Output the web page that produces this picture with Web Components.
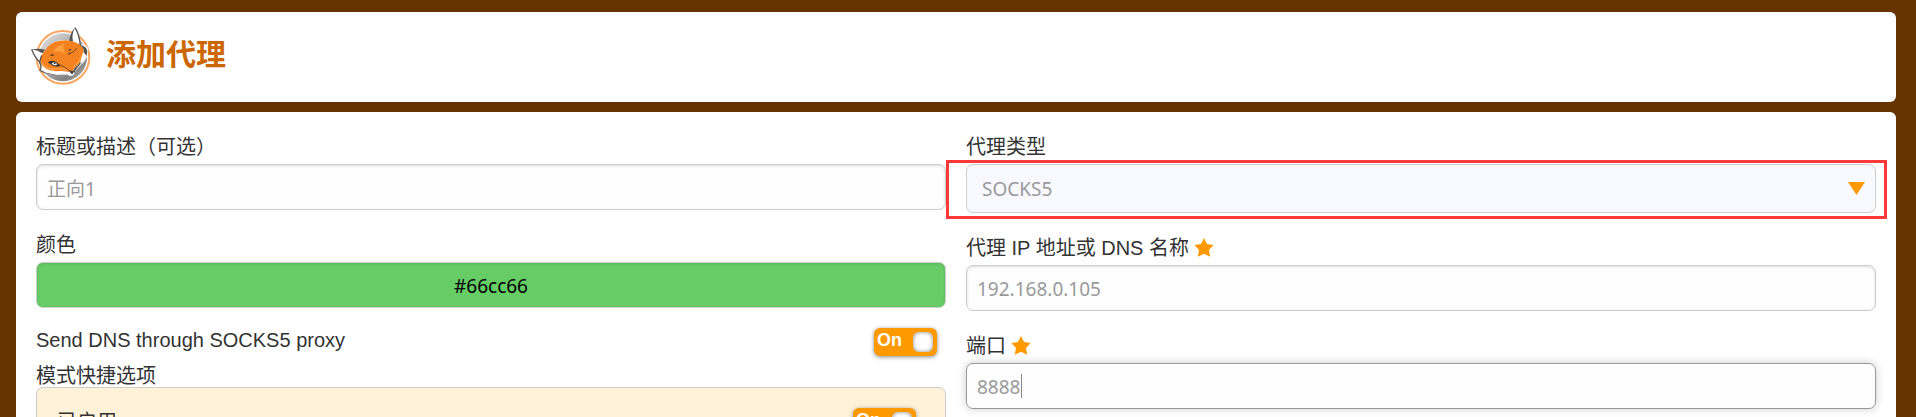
<!DOCTYPE html>
<html lang="zh-CN">
<head>
<meta charset="utf-8">
<title>添加代理</title>
<style>
    html, body {
        height: 100%;
        margin: 0;
        overflow: hidden;
    }

    body {
        background: #663300;
        color: #333;
        font: 20px/30px "Liberation Sans", "Noto Sans CJK SC", sans-serif;
    }
</style>
</head>
<body>
<proxy-page></proxy-page>

<script>
class FoxLogo extends HTMLElement {
    constructor() {
        super();
        this.attachShadow({ mode: "open" });

        this.shadowRoot.innerHTML = `
            <style>
                :host {
                    display: block;
                    width: 76px;
                    height: 70px;
                }

                svg {
                    display: block;
                    width: 100%;
                    height: 100%;
                }
            </style>

            <svg viewBox="0 0 228 210" aria-hidden="true">
                <defs>
                    <linearGradient id="disc" x1="0" y1="0" x2="1" y2="1">
                        <stop offset="0" stop-color="#e4e4e4"/>
                        <stop offset=".4" stop-color="#b4b4b4"/>
                        <stop offset=".75" stop-color="#808080"/>
                        <stop offset="1" stop-color="#c0c0c0"/>
                    </linearGradient>
                </defs>
                <circle cx="117" cy="112" r="79" fill="#fff" stroke="#faa661" stroke-width="6"/>
                <circle cx="117" cy="112" r="72" fill="url(#disc)"/>
                <!-- head -->
                <path d="M22 88 Q42 85 64 89 Q80 66 108 61 Q125 59 138 61 Q138 40 153 22 Q165 38 169 72 Q186 74 193 84 Q193 108 180 127 Q158 144 149 164 Q142 170 131 166 Q94 171 64 159 L48 151 Q55 138 46 126 Q33 116 22 88Z" fill="#fff"/>
                <path d="M62 92 Q79 65 108 62 Q142 56 170 75 Q182 86 179 103 Q173 128 158 139 Q147 147 144 158 Q119 150 96 154 Q59 151 49 127 Q49 106 62 92Z" fill="#f58220"/>
                <path d="M88 96 Q97 77 121 71 Q113 82 125 101 Q111 91 88 96Z" fill="#ffa041"/>
                <path d="M53 128 Q60 144 87 147 Q110 144 128 150 M148 143 Q162 132 171 110" fill="none" stroke="#ffa041" stroke-width="4"/>
                <!-- ears -->
                <path d="M23 88 Q44 84 64 89 L55 100 Q43 91 23 88Z M136 63 Q137 41 153 22 Q142 45 147 64Z" fill="#555"/>
                <path d="M23 88 Q32 113 47 126 L53 106 M153 23 Q166 43 169 76" fill="none" stroke="#555" stroke-width="4"/>
                <!-- cheeks and muzzle -->
                <path d="M168 74 Q191 80 190 95 Q188 115 176 127 Q161 138 151 158 L146 156 Q151 142 164 133 Q180 112 180 94 Q178 82 168 74Z" fill="#555"/>
                <path d="M177 96 L188 107 Q184 123 168 131Z" fill="#fff"/>
                <path d="M46 126 Q55 139 48 151 L64 159" fill="none" stroke="#555" stroke-width="4"/>
                <path d="M64 159 Q98 170 132 165" fill="none" stroke="#777" stroke-width="3"/>
                <!-- open eye, wink and brows -->
                <path d="M71 127 Q88 113 110 138 Q89 143 79 132Z" fill="#333"/>
                <path d="M83 131 Q92 122 100 133 Q92 139 83 131Z" fill="#fff"/>
                <circle cx="92" cy="130" r="3" fill="#333"/>
                <path d="M107 134 Q123 141 141 155 M137 96 Q137 104 133 103 Q148 98 160 85" fill="none" stroke="#7a4a25" stroke-width="3"/>
                <path d="M77 107 Q85 99 91 107Z M133 94 Q134 84 144 88Z" fill="#5b3920"/>
                <path d="M136 153 Q143 149 149 155 Q148 164 142 162Z" fill="#444"/>
            </svg>
        `;
    }
}

class PageHeader extends HTMLElement {
    constructor() {
        super();
        this.attachShadow({ mode: "open" });

        this.shadowRoot.innerHTML = `
            <style>
                :host {
                    display: flex;
                    align-items: center;
                    gap: 6px;
                    padding: 8px 8px 12px;
                    background: #fff;
                    border-radius: 6px;
                }

                h1 {
                    margin: 0;
                    color: #cc6600;
                    font-size: 30px;
                    line-height: 40px;
                    font-weight: bold;
                }
            </style>

            <fox-logo></fox-logo>
            <h1><slot></slot></h1>
        `;
    }
}

class StarMark extends HTMLElement {
    constructor() {
        super();
        this.attachShadow({ mode: "open" });

        this.shadowRoot.innerHTML = `
            <style>
                :host {
                    display: block;
                    width: 20px;
                    height: 20px;
                }

                svg {
                    display: block;
                }
            </style>

            <svg width="20" height="20" viewBox="0 0 20 20" aria-hidden="true">
                <path d="M10 0 L13 6 L19.6 7 L15 12 L16.2 18.8 L10 15.8 L3.8 18.8 L5 12 L0.4 7 L7 6Z" fill="#ff9900"/>
            </svg>
        `;
    }
}

class TextField extends HTMLElement {
    constructor() {
        super();
        this.attachShadow({ mode: "open" });

        this.shadowRoot.innerHTML = `
            <style>
                :host {
                    display: block;
                }

                label {
                    display: flex;
                    align-items: center;
                    gap: 5px;
                    margin-bottom: 2px;
                }

                .box {
                    position: relative;
                }

                input {
                    display: block;
                    box-sizing: border-box;
                    width: 100%;
                    height: 46px;
                    padding: 2px 10px 0;
                    border: 1px solid #ccc;
                    border-radius: 7px;
                    outline: none;
                    background: #fefefe;
                    box-shadow: inset 0 1px 3px #ddd;
                    color: #999;
                    font: 19px "Noto Sans", "Noto Sans CJK SC", sans-serif;
                }

                :host([color]) input {
                    background: #66cc66;
                    box-shadow: inset 0 1px 3px #5ab45a;
                    color: #000;
                    text-align: center;
                }

                :host([active]) input {
                    border-color: #999;
                    box-shadow: 0 0 8px #ccc;
                }

                star-mark, .caret {
                    display: none;
                }

                :host([required]) star-mark {
                    display: block;
                }

                :host([active]) .caret {
                    display: block;
                    position: absolute;
                    left: 55px;
                    top: 11px;
                    width: 1px;
                    height: 24px;
                    background: #888;
                }
            </style>

            <label for="field"><span></span><star-mark></star-mark></label>
            <div class="box">
                <input id="field" type="text">
                <i class="caret"></i>
            </div>
        `;
    }

    connectedCallback() {
        this.shadowRoot.querySelector("span").textContent = this.getAttribute("label");
        this.shadowRoot.querySelector("input").value = this.getAttribute("value");
    }
}

class SelectField extends HTMLElement {
    constructor() {
        super();
        this.attachShadow({ mode: "open" });

        this.shadowRoot.innerHTML = `
            <style>
                :host {
                    display: block;
                }

                label {
                    display: block;
                    margin-bottom: 2px;
                }

                .box {
                    position: relative;
                }

                select {
                    display: block;
                    appearance: none;
                    box-sizing: border-box;
                    width: 100%;
                    height: 49px;
                    padding: 0 40px 0 15px;
                    border: 1px solid #ccc;
                    border-radius: 7px;
                    background: #f8f8ff;
                    color: #999;
                    font: 19px "Noto Sans", "Noto Sans CJK SC", sans-serif;
                }

                .arrow {
                    position: absolute;
                    right: 11px;
                    top: 18px;
                    pointer-events: none;
                }

                /* highlight frame round the drop-down */
                .frame {
                    position: absolute;
                    inset: -4px -11px -6px -20px;
                    border: 3px solid #fd3838;
                    pointer-events: none;
                }
            </style>

            <label for="field"></label>
            <div class="box">
                <select id="field"><option></option></select>
                <svg class="arrow" width="17" height="13" viewBox="0 0 17 13" aria-hidden="true">
                    <path d="M0 0H17L8.5 13Z" fill="#ff9900"/>
                </svg>
                <div class="frame"></div>
            </div>
        `;
    }

    connectedCallback() {
        this.shadowRoot.querySelector("label").textContent = this.getAttribute("label");
        this.shadowRoot.querySelector("option").textContent = this.getAttribute("value");
    }
}

class SwitchRow extends HTMLElement {
    constructor() {
        super();
        this.attachShadow({ mode: "open" });

        this.shadowRoot.innerHTML = `
            <style>
                :host {
                    display: block;
                    line-height: 24px;
                }

                label {
                    display: flex;
                    justify-content: space-between;
                    align-items: flex-start;
                    padding-right: 9px;
                }

                .switch {
                    display: flex;
                    justify-content: space-between;
                    box-sizing: border-box;
                    width: 63px;
                    height: 28px;
                    padding: 4px 4px 4px 3px;
                    border-radius: 6px;
                    background: #ff9900;
                    box-shadow: 0 1px 4px #888;
                    color: #fff;
                    font-size: 18px;
                    font-weight: bold;
                    line-height: 16px;
                }

                input {
                    appearance: none;
                    width: 20px;
                    height: 20px;
                    margin: 0;
                    border-radius: 6px;
                    background: #fff;
                    box-shadow: inset 0 0 4px #888;
                }
            </style>

            <label>
                <slot></slot>
                <span class="switch">On<input type="checkbox" checked></span>
            </label>
        `;
    }
}

class PatternBox extends HTMLElement {
    constructor() {
        super();
        this.attachShadow({ mode: "open" });

        this.shadowRoot.innerHTML = `
            <style>
                :host {
                    display: block;
                }

                h2 {
                    margin: 0;
                    font-size: 20px;
                    line-height: 22px;
                    font-weight: normal;
                }

                .panel {
                    padding: 20px;
                    border: 1px solid #ccc;
                    border-radius: 7px;
                    background: #fff2d9;
                }
            </style>

            <h2>模式快捷选项</h2>
            <div class="panel"><slot></slot></div>
        `;
    }
}

class ProxyPage extends HTMLElement {
    constructor() {
        super();
        this.attachShadow({ mode: "open" });

        this.shadowRoot.innerHTML = `
            <style>
                :host {
                    display: flex;
                    flex-direction: column;
                    gap: 10px;
                    box-sizing: border-box;
                    min-height: 100%;
                    padding: 12px 20px 0 16px;
                }

                form {
                    flex: 1;
                    display: grid;
                    grid-template-columns: 1fr 1fr;
                    gap: 20px;
                    padding: 20px;
                    border-radius: 6px 6px 0 0;
                    background: #fff;
                }

                .column {
                    display: flex;
                    flex-direction: column;
                    gap: 20px;
                    min-width: 0;
                }

                .options {
                    display: flex;
                    flex-direction: column;
                    gap: 9px;
                }

                pattern-box switch-row {
                    line-height: 28px;
                }
            </style>

            <page-header>添加代理</page-header>
            <form>
                <div class="column">
                    <text-field label="标题或描述（可选）" value="正向1"></text-field>
                    <text-field label="颜色" value="#66cc66" color></text-field>
                    <div class="options">
                        <switch-row>Send DNS through SOCKS5 proxy</switch-row>
                        <pattern-box><switch-row>已启用</switch-row></pattern-box>
                    </div>
                </div>
                <div class="column">
                    <select-field label="代理类型" value="SOCKS5"></select-field>
                    <text-field label="代理 IP 地址或 DNS 名称" value="192.168.0.105" required></text-field>
                    <text-field label="端口" value="8888" required active></text-field>
                </div>
            </form>
        `;
    }
}

customElements.define("fox-logo", FoxLogo);
customElements.define("page-header", PageHeader);
customElements.define("star-mark", StarMark);
customElements.define("text-field", TextField);
customElements.define("select-field", SelectField);
customElements.define("switch-row", SwitchRow);
customElements.define("pattern-box", PatternBox);
customElements.define("proxy-page", ProxyPage);
</script>
</body>
</html>
